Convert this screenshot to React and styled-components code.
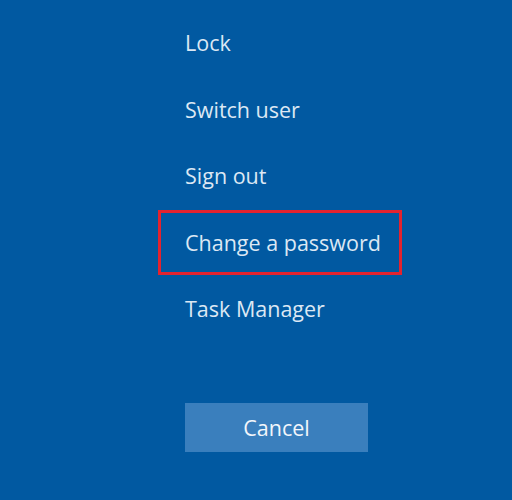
import React from "react";
import styled, { createGlobalStyle } from "styled-components";

const GlobalStyle = createGlobalStyle`
  html, body {
    margin: 0;
    padding: 0;
    background: #0159a1;
  }
`;

const Screen = styled.div`
  width: 512px;
  height: 500px;
  background: #0159a1;
  font-family: "Open Sans", "Noto Sans", sans-serif;
  overflow: hidden;
`;

const Menu = styled.div`
  display: flex;
  flex-direction: column;
  align-items: flex-start;
  gap: 1.5px;
  padding: 10px 0 0 185px;
`;

const Item = styled.div`
  box-sizing: border-box;
  display: flex;
  align-items: center;
  height: 65px;
  margin-left: -27px;
  padding: 0 18px 0 24px;
  border: 3px solid ${(p) => (p.$highlight ? "#e3232f" : "transparent")};
  color: #dce8f4;
  font-size: 21.5px;
  cursor: pointer;
`;

const CancelButton = styled.button`
  margin: 62px 0 0 185px;
  width: 183px;
  height: 49px;
  border: none;
  background: #3a7fbd;
  color: #f2f6fb;
  font-family: inherit;
  font-size: 21.5px;
  cursor: pointer;
`;

export default function App() {
  const items = ["Lock", "Switch user", "Sign out", "Change a password", "Task Manager"];
  return (
    <>
      <GlobalStyle />
      <Screen>
        <Menu>
          {items.map((label) => (
            <Item key={label} $highlight={label === "Change a password"}>
              {label}
            </Item>
          ))}
        </Menu>
        <CancelButton>Cancel</CancelButton>
      </Screen>
    </>
  );
}
